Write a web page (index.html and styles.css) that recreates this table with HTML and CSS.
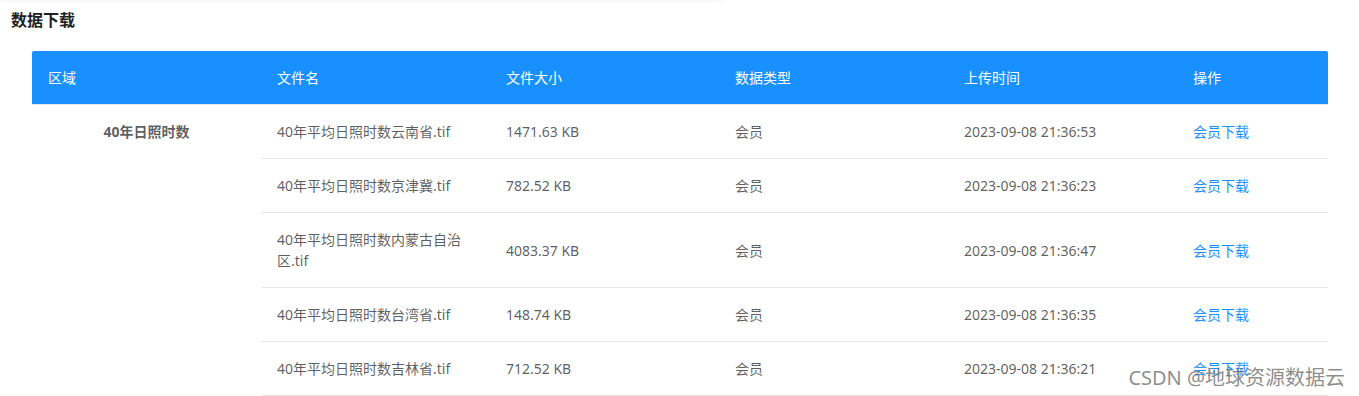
FILE: index.html
```html
<!DOCTYPE html>
<html lang="zh-CN">
<head>
    <meta charset="UTF-8">
    <meta name="viewport" content="width=device-width, initial-scale=1.0">
    <title>数据下载</title>
    <link rel="stylesheet" href="styles.css">
</head>
<body>
    <div class="top-edge"></div>
    <h2 class="section-title">数据下载</h2>
    <div class="table-wrap">
        <table class="data-table">
            <colgroup>
                <col class="col-area">
                <col class="col-name">
                <col class="col-size">
                <col class="col-type">
                <col class="col-time">
                <col class="col-action">
            </colgroup>
            <thead>
                <tr>
                    <th>区域</th>
                    <th>文件名</th>
                    <th>文件大小</th>
                    <th>数据类型</th>
                    <th>上传时间</th>
                    <th>操作</th>
                </tr>
            </thead>
            <tbody>
                <tr>
                    <td class="area-cell" rowspan="5">40年日照时数</td>
                    <td>40年平均日照时数云南省.tif</td>
                    <td>1471.63 KB</td>
                    <td>会员</td>
                    <td>2023-09-08 21:36:53</td>
                    <td><a class="dl-link" href="#">会员下载</a></td>
                </tr>
                <tr>
                    <td>40年平均日照时数京津冀.tif</td>
                    <td>782.52 KB</td>
                    <td>会员</td>
                    <td>2023-09-08 21:36:23</td>
                    <td><a class="dl-link" href="#">会员下载</a></td>
                </tr>
                <tr>
                    <td>40年平均日照时数内蒙古自治区.tif</td>
                    <td>4083.37 KB</td>
                    <td>会员</td>
                    <td>2023-09-08 21:36:47</td>
                    <td><a class="dl-link" href="#">会员下载</a></td>
                </tr>
                <tr>
                    <td>40年平均日照时数台湾省.tif</td>
                    <td>148.74 KB</td>
                    <td>会员</td>
                    <td>2023-09-08 21:36:35</td>
                    <td><a class="dl-link" href="#">会员下载</a></td>
                </tr>
                <tr>
                    <td>40年平均日照时数吉林省.tif</td>
                    <td>712.52 KB</td>
                    <td>会员</td>
                    <td>2023-09-08 21:36:21</td>
                    <td><a class="dl-link" href="#">会员下载</a></td>
                </tr>
            </tbody>
        </table>
    </div>
    <div class="watermark">CSDN @地球资源数据云</div>
</body>
</html>
```

FILE: styles.css
```css
body {
    font-family: "Noto Sans", "Noto Sans CJK SC", sans-serif;
    margin: 0;
    padding: 0;
    background-color: #fff;
    color: rgba(0, 0, 0, 0.65);
    font-size: 14px;
    position: relative;
    overflow: hidden;
}
.top-edge {
    width: 720px;
    height: 0;
    box-shadow: 0 0 4px 1px rgba(0, 0, 0, 0.08);
}
.section-title {
    margin: 0;
    padding: 8px 0 0 11px;
    font-size: 16px;
    line-height: 24px;
    font-weight: 700;
    color: #1f1f1f;
}
.table-wrap {
    padding: 19px 0 0 32px;
}
.data-table {
    width: 1296px;
    table-layout: fixed;
    border-collapse: collapse;
    border-spacing: 0;
}
.col-area, .col-name, .col-size, .col-type, .col-time {
    width: 229px;
}
.col-action {
    width: 151px;
}
.data-table th {
    background-color: #1890ff;
    color: #fff;
    font-weight: 400;
    text-align: left;
    padding: 16px;
    line-height: 21px;
    border-bottom: 1px solid #e8e8e8;
}
.data-table th:first-child {
    border-top-left-radius: 2px;
}
.data-table th:last-child {
    border-top-right-radius: 2px;
}
.data-table td {
    padding: 16px;
    line-height: 21px;
    border-bottom: 1px solid #e8e8e8;
    vertical-align: middle;
    word-break: break-all;
}
.data-table td.area-cell {
    text-align: center;
    vertical-align: top;
    font-weight: 700;
    border-bottom: none;
}
.dl-link {
    color: #1890ff;
    text-decoration: none;
}
.watermark {
    position: absolute;
    right: 14px;
    top: 365px;
    font-size: 20px;
    line-height: 26px;
    color: rgba(90, 90, 90, 0.7);
    text-shadow: 1px 1px 1px rgba(255, 255, 255, 0.8);
}
```
